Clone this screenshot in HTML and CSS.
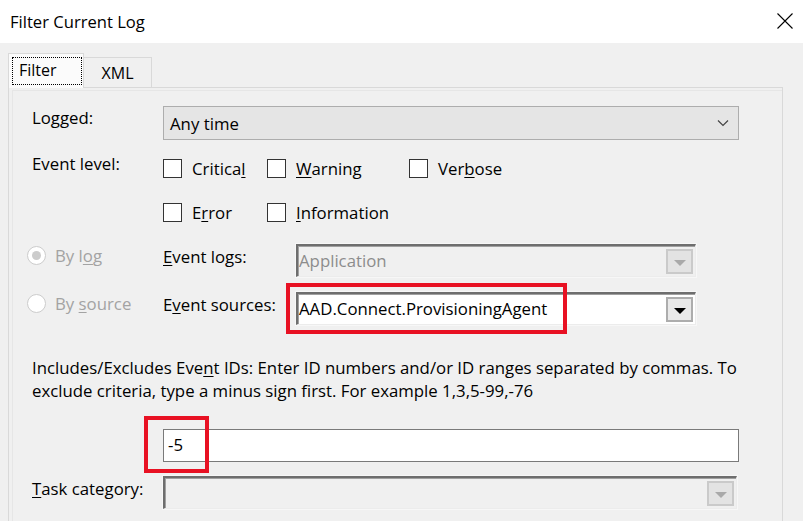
FILE: index.html
```html
<!DOCTYPE html>
<html>
<head>
<meta charset="utf-8">
<link rel="stylesheet" href="styles.css">
</head>
<body>
<div class="dialog">
  <div class="titlebar">
    <span class="title">Filter Current Log</span>
    <svg class="close" width="16" height="16" viewBox="0 0 16 16"><path d="M0.5 0.5 L15.5 15.5 M15.5 0.5 L0.5 15.5" stroke="#000" stroke-width="1.1" fill="none"/></svg>
  </div>
  <div class="body">
    <div class="tabs">
      <div class="tab active"><span class="focus">Filter</span></div>
      <div class="tab">XML</div>
    </div>
    <div class="panel">
      <div class="row row-logged">
        <div class="label">Lo<u>g</u>ged:</div>
        <div class="flatcombo"><span>Any time</span>
          <svg width="12" height="8" viewBox="0 0 12 8"><path d="M1 1.5 L6 6.5 L11 1.5" stroke="#444" stroke-width="1.2" fill="none"/></svg>
        </div>
      </div>
      <div class="row row-level1">
        <div class="label">Event level:</div>
        <div class="checks">
          <label class="chk w-crit"><span class="box"></span>Critica<u>l</u></label>
          <label class="chk w-warn"><span class="box"></span><u>W</u>arning</label>
          <label class="chk"><span class="box"></span>Ver<u>b</u>ose</label>
        </div>
      </div>
      <div class="row row-level2">
        <div class="label"></div>
        <div class="checks">
          <label class="chk w-crit"><span class="box"></span>E<u>r</u>ror</label>
          <label class="chk w-warn"><span class="box"></span><u>I</u>nformation</label>
        </div>
      </div>
      <div class="row row-src row-bylog">
        <div class="radio-col"><span class="radio checked"></span><span class="disabled">By l<u>o</u>g</span></div>
        <div class="srclabel"><u>E</u>vent logs:</div>
        <div class="combo disabled-combo"><span class="val">Application</span><span class="ddbtn"><span class="tri"></span></span></div>
      </div>
      <div class="row row-src row-bysrc">
        <div class="radio-col"><span class="radio"></span><span class="disabled">By <u>s</u>ource</span></div>
        <div class="srclabel">E<u>v</u>ent sources:</div>
        <div class="combo"><span class="val">AAD.Connect.ProvisioningAgent</span><span class="ddbtn"><span class="tri"></span></span></div>
      </div>
      <p class="help">Includes/Excludes Eve<u>n</u>t IDs: Enter ID numbers and/or ID ranges separated by commas. To exclude criteria, type a minus sign first. For example 1,3,5-99,-76</p>
      <div class="row row-ids">
        <div class="idinput">-5</div>
      </div>
      <div class="row row-task">
        <div class="label"><u>T</u>ask category:</div>
        <div class="combo disabled-combo wide"><span class="val"></span><span class="ddbtn"><span class="tri"></span></span></div>
      </div>
      <div class="mark mark-src"></div>
      <div class="mark mark-id"></div>
    </div>
  </div>
</div>
</body>
</html>
```

FILE: styles.css
```css
* { box-sizing: border-box; }
html, body { margin: 0; padding: 0; }
body {
  width: 803px;
  height: 521px;
  overflow: hidden;
  background: #f0f0f0;
  font-family: "Open Sans", "Noto Sans", sans-serif;
  font-size: 16.8px;
  color: #000;
}
u { text-decoration: underline; text-underline-offset: 2px; text-decoration-thickness: 1px; }

.titlebar {
  height: 43px;
  background: #fff;
  display: flex;
  align-items: center;
  justify-content: space-between;
  padding: 0 10px 0 10px;
}
.title { font-size: 16.6px; margin-top: -1px; }
.close { margin-right: 0px; margin-top: -1px; }

.body { padding: 10px 20px 0 8px; }
.tabs { display: flex; align-items: flex-end; height: 34px; position: relative; z-index: 2; }
.tab {
  height: 30px;
  width: 68px;
  border: 1px solid #d9d9d9;
  border-bottom: none;
  background: #f0f0f0;
  display: flex;
  align-items: center;
  justify-content: center;
  font-size: 16px;
  padding-top: 1px;
}
.tab.active {
  height: 35px;
  width: 76px;
  background: #fbfbfb;
  margin-bottom: -1px;
  border-right: 1px solid #d9d9d9;
  justify-content: flex-start;
  padding-left: 3px;
  padding-top: 0;
}
.tab.active + .tab { border-left: none; }
.focus {
  display: block;
  width: 70px;
  height: 28px;
  border: 1px dotted #000;
  padding: 0 0 0 6px;
  line-height: 25px;
}
.panel {
  position: relative;
  width: 775px;
  height: 440px;
  border: 1px solid #d9d9d9;
  padding: 18px 0 0 23px;
  box-shadow: inset 4px 3px 0 -1px #f0f0f0, inset 5px 4px 0 -1px #e6e6e6;
}

.row { display: flex; }
.label { width: 131px; flex: none; }
.row-logged { height: 34px; }
.row-logged .label { padding-top: 0px; }
.flatcombo {
  width: 576px;
  height: 34px;
  background: #e5e5e5;
  border: 1px solid #adadad;
  display: flex;
  align-items: center;
  justify-content: space-between;
  padding: 0 9px 0 6px;
}
.flatcombo span { margin-top: 1px; }
.row-level1 { margin-top: 13px; height: 30px; align-items: center; }
.row-level1 .label { margin-top: -10px; }
.row-level2 { margin-top: 14px; height: 30px; align-items: center; }
.checks { display: flex; align-items: center; }
.chk { display: flex; align-items: center; width: 104px; }
.chk.w-crit { width: 104px; }
.chk.w-warn { width: 142px; }
.box {
  width: 19px;
  height: 19px;
  border: 1px solid #333;
  background: #fff;
  margin-right: 10px;
  flex: none;
}

.row-src { align-items: center; height: 33px; }
.row-bylog { margin-top: 17px; }
.row-bysrc { margin-top: 15px; }
.radio-col { width: 136px; margin-left: -5px; margin-top: -10px; display: flex; align-items: center; color: #a3a3a3; }
.radio {
  width: 19px; height: 19px; border-radius: 50%;
  border: 1px solid #cccccc;
  background: #fff;
  margin-right: 9px;
  position: relative;
  flex: none;
}
.radio.checked::after {
  content: "";
  position: absolute;
  left: 4px; top: 4px;
  width: 9px; height: 9px; border-radius: 50%;
  background: #cccccc;
}
.disabled { color: #a3a3a3; }
.srclabel { width: 133px; flex: none; margin-top: -9px; }
.combo {
  width: 400px;
  height: 33px;
  display: flex;
  align-items: center;
  justify-content: space-between;
  background: #fff;
  border-top: 2px solid #6e6e6e;
  border-left: 2px solid #6e6e6e;
  border-right: 1px solid #ececec;
  border-bottom: 1px solid #ececec;
  box-shadow: inset 1px 1px 0 #a0a0a0, 0 0 0 1px #f7f7f7;
  padding: 0 2px 0 1px;
}
.combo .val { padding-left: 0; margin-top: -1px; }
.disabled-combo { background: #f0f0f0; }
.disabled-combo .val { color: #8c8c8c; }
.ddbtn {
  width: 27px;
  height: 25px;
  border: 2px solid #adadad;
  background: #e9e9e9;
  display: flex;
  align-items: center;
  justify-content: center;
  margin-top: 1px;
}
.tri { width: 0; height: 0; border-left: 6px solid transparent; border-right: 6px solid transparent; border-top: 6px solid #000; margin-top: 2px; }
.disabled-combo .ddbtn { border-color: #cacaca; background: #e3e3e3; }
.disabled-combo .tri { border-top-color: #a9a9a9; }

.help { margin: 31px 0 0 0; line-height: 23px; width: 722px; }

.row-ids { margin-top: 27px; padding-left: 131px; }
.idinput {
  width: 576px;
  height: 33px;
  background: #fff;
  border: 1px solid #7a7a7a;
  padding: 3px 0 0 4px;
}
.row-task { margin-top: 14px; align-items: center; height: 33px; }
.row-task .label { margin-top: -8px; }
.combo.wide { width: 574px; }
.combo.wide .ddbtn { margin-right: 0; }

.mark { position: absolute; border: 4px solid #e81123; }
.mark-src { left: 277px; top: 195px; width: 281px; height: 51px; }
.mark-id { left: 135px; top: 328px; width: 65px; height: 57px; }
```
